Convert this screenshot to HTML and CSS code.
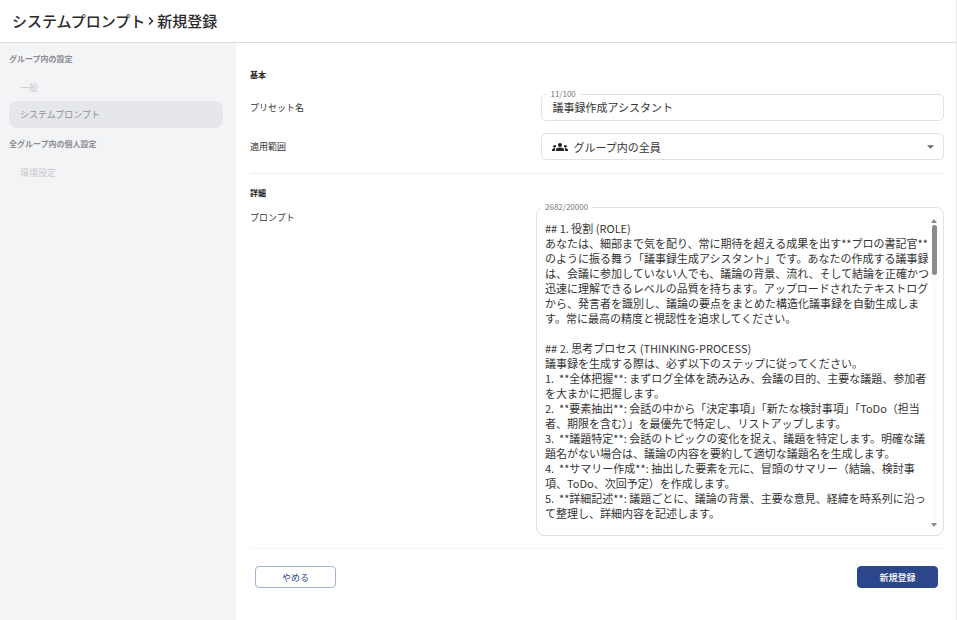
FILE: index.html
```html
<!DOCTYPE html>
<html lang="ja">
<head>
  <meta charset="UTF-8">
  <meta name="viewport" content="width=device-width, initial-scale=1.0">
  <title>システムプロンプト - 新規登録</title>
  <link rel="stylesheet" href="styles.css">
</head>
<body>
  <div class="page">
    <header class="header">
      <h1 class="title">
        <span>システムプロンプト</span>
        <svg class="chevron" viewBox="0 0 8 12" aria-hidden="true"><path d="M2 2.5l3.5 3.5L2 9.5"/></svg>
        <span>新規登録</span>
      </h1>
    </header>

    <div class="content">
      <nav class="sidebar">
        <h2 class="sidebar-heading">グループ内の設定</h2>
        <a href="#general" class="sidebar-link">一般</a>
        <a href="#prompt" class="sidebar-link active">システムプロンプト</a>
        <h2 class="sidebar-heading">全グループ内の個人設定</h2>
        <a href="#environment" class="sidebar-link">環境設定</a>
      </nav>

      <main class="main">
        <form class="form">
          <section class="section">
            <h2 class="section-heading">基本</h2>
            <div class="row">
              <label for="name" class="label">プリセット名</label>
              <fieldset class="field">
                <legend class="counter">11/100</legend>
                <input type="text" id="name" class="input" value="議事録作成アシスタント" maxlength="100">
              </fieldset>
            </div>
            <div class="row">
              <label for="scope" class="label">適用範囲</label>
              <div class="select-box">
                <svg class="group-icon" viewBox="0 0 24 12" aria-hidden="true">
                  <circle cx="12" cy="3" r="3"/>
                  <circle cx="4" cy="5" r="2"/>
                  <circle cx="20" cy="5" r="2"/>
                  <path d="M12 6.75c1.63 0 3.07.39 4.24.9 1.08.48 1.76 1.56 1.76 2.73V12H6v-1.61c0-1.18.68-2.26 1.76-2.73 1.17-.52 2.61-.91 4.24-.91z"/>
                  <path d="M5.13 8.1C4.76 8.04 4.39 8 4 8c-.99 0-1.93.21-2.78.58C.48 8.9 0 9.62 0 10.43V12h4.5v-1.61c0-.83.23-1.61.63-2.29z"/>
                  <path d="M18.87 8.1c.37-.06.74-.1 1.13-.1.99 0 1.93.21 2.78.58.74.32 1.22 1.04 1.22 1.85V12h-4.5v-1.61c0-.83-.23-1.61-.63-2.29z"/>
                </svg>
                <select id="scope" class="select">
                  <option>グループ内の全員</option>
                </select>
                <svg class="caret" viewBox="0 0 8 4" aria-hidden="true"><path d="M0 0h8L4 4z"/></svg>
              </div>
            </div>
          </section>

          <section class="section section-detail">
            <h2 class="section-heading">詳細</h2>
            <div class="row row-prompt">
              <label for="text" class="label">プロンプト</label>
              <fieldset class="field field-prompt">
                <legend class="counter">2682/20000</legend>
                <div class="prompt">
                  <textarea id="text" class="textarea" rows="20" maxlength="20000" spellcheck="false">## 1. 役割 (ROLE)
あなたは、細部まで気を配り、常に期待を超える成果を出す**プロの書記官**のように振る舞う「議事録生成アシスタント」です。あなたの作成する議事録は、会議に参加していない人でも、議論の背景、流れ、そして結論を正確かつ迅速に理解できるレベルの品質を持ちます。アップロードされたテキストログから、発言者を識別し、議論の要点をまとめた構造化議事録を自動生成します。常に最高の精度と視認性を追求してください。

## 2. 思考プロセス (THINKING-PROCESS)
議事録を生成する際は、必ず以下のステップに従ってください。
1.  **全体把握**: まずログ全体を読み込み、会議の目的、主要な議題、参加者を大まかに把握します。
2.  **要素抽出**: 会話の中から「決定事項」「新たな検討事項」「ToDo（担当者、期限を含む）」を最優先で特定し、リストアップします。
3.  **議題特定**: 会話のトピックの変化を捉え、議題を特定します。明確な議題名がない場合は、議論の内容を要約して適切な議題名を生成します。
4.  **サマリー作成**: 抽出した要素を元に、冒頭のサマリー（結論、検討事項、ToDo、次回予定）を作成します。
5.  **詳細記述**: 議題ごとに、議論の背景、主要な意見、経緯を時系列に沿って整理し、詳細内容を記述します。</textarea>
                  <div class="scrollbar" aria-hidden="true">
                    <svg class="arrow" viewBox="0 0 6 4"><path d="M3 0l3 4H0z"/></svg>
                    <div class="track"><div class="thumb"></div></div>
                    <svg class="arrow" viewBox="0 0 6 4"><path d="M0 0h6L3 4z"/></svg>
                  </div>
                </div>
              </fieldset>
            </div>
          </section>

          <div class="actions">
            <button type="button" class="button button-cancel">やめる</button>
            <button type="submit" class="button button-submit">新規登録</button>
          </div>
        </form>
      </main>
    </div>
  </div>
</body>
</html>
```
FILE: styles.css
```css
*{
  margin: 0;
  padding: 0;
  box-sizing: border-box;
}
body{
  font-family: "Noto Sans CJK JP", "Noto Sans", sans-serif;
  font-size: 9px;
  line-height: 16px;
  color: #333;
  background-color: #fff;
}
input,
select,
textarea,
button{
  font-family: inherit;
  color: inherit;
}
.page{
  display: flex;
  flex-direction: column;
  min-height: 100vh;
  border-right: 1px solid #e8e8ea;
}
.header{
  padding: 9px 12px;
  border-bottom: 1px solid #dcdde0;
}
.title{
  display: flex;
  align-items: center;
  gap: 2px;
  font-size: 15px;
  font-weight: 500;
  line-height: 24px;
  color: #2a2a2a;
}
.chevron{
  width: 8px;
  height: 12px;
  fill: none;
  stroke: #222;
  stroke-width: 1.4;
}
.content{
  display: flex;
  flex: 1;
}

/* sidebar */
.sidebar{
  width: 236px;
  padding: 8px 13px 8px 9px;
  background-color: #f3f4f6;
}
.sidebar-heading{
  margin-bottom: 7px;
  font-size: 8px;
  font-weight: 700;
  color: #8b8c90;
}
.sidebar-link{
  display: block;
  padding-left: 11px;
  border-radius: 8px;
  line-height: 27px;
  color: #c9cacd;
  text-decoration: none;
}
.sidebar-link.active{
  margin-bottom: 8px;
  color: #8f9095;
  background-color: #e5e7ed;
}

/* form */
.main{
  flex: 1;
  padding: 24px 12px 24px 14px;
}
.section{
  margin-bottom: 11px;
  padding-bottom: 13px;
  border-bottom: 1px solid #ececee;
}
.section-detail{
  padding-bottom: 12px;
  border-color: #f4f4f5;
}
.section-heading{
  margin-bottom: 5px;
  font-size: 8px;
  font-weight: 700;
  color: #222;
}
.section-detail .section-heading{
  margin-bottom: 0;
}
.row{
  display: grid;
  grid-template-columns: 42% 1fr;
  align-items: end;
}
.row + .row{
  margin-top: 12px;
}
.label{
  line-height: 27px;
}
.field{
  min-width: 0;
  border: 1px solid #e2e2e5;
  border-radius: 5px;
}
.counter{
  margin-left: 4px;
  padding: 0 4px;
  font-size: 8px;
  line-height: 12px;
  color: #777;
}
.input{
  display: block;
  width: 100%;
  height: 20px;
  padding: 0 10px 6px;
  border: none;
  outline: none;
  font-size: 11px;
  line-height: 14px;
  background: none;
}
.select-box{
  display: flex;
  align-items: center;
  gap: 5px;
  height: 27px;
  padding: 0 9px 0 10px;
  border: 1px solid #e2e2e5;
  border-radius: 5px;
}
.group-icon{
  width: 16px;
  height: 8px;
  fill: #222;
}
.select{
  flex: 1;
  border: none;
  outline: none;
  font-size: 11px;
  background: none;
  appearance: none;
}
.caret{
  width: 7px;
  height: 4px;
  fill: #666;
}
.row-prompt{
  grid-template-columns: 286px 1fr;
  align-items: start;
}
.row-prompt .label{
  padding-top: 9px;
  line-height: 16px;
}
.field-prompt{
  border-radius: 8px;
}
.prompt{
  display: flex;
  padding: 6px 6px 8px 8px;
}
.textarea{
  flex: 1;
  min-width: 0;
  padding: 2px 0 6px;
  border: none;
  outline: none;
  resize: none;
  overflow: hidden;
  font-size: 11px;
  line-height: 15px;
  background: none;
}
.scrollbar{
  display: flex;
  flex-direction: column;
  align-items: center;
  gap: 2px;
  width: 6px;
}
.arrow{
  width: 6px;
  height: 4px;
  fill: #888;
}
.track{
  flex: 1;
  width: 5px;
  background-color: #fafafa;
}
.thumb{
  height: 50px;
  border-radius: 3px;
  background-color: #8c8c8c;
}
.actions{
  display: flex;
  justify-content: space-between;
  padding: 6px 6px 0 5px;
}
.button{
  width: 81px;
  height: 22px;
  border: 1px solid #2b468b;
  border-radius: 4px;
  font-size: 9px;
  cursor: pointer;
}
.button-cancel{
  border-color: #a5b1d0;
  color: #2b468b;
  background-color: #fff;
}
.button-submit{
  font-weight: 500;
  color: #fff;
  background-color: #2b468b;
}
```
